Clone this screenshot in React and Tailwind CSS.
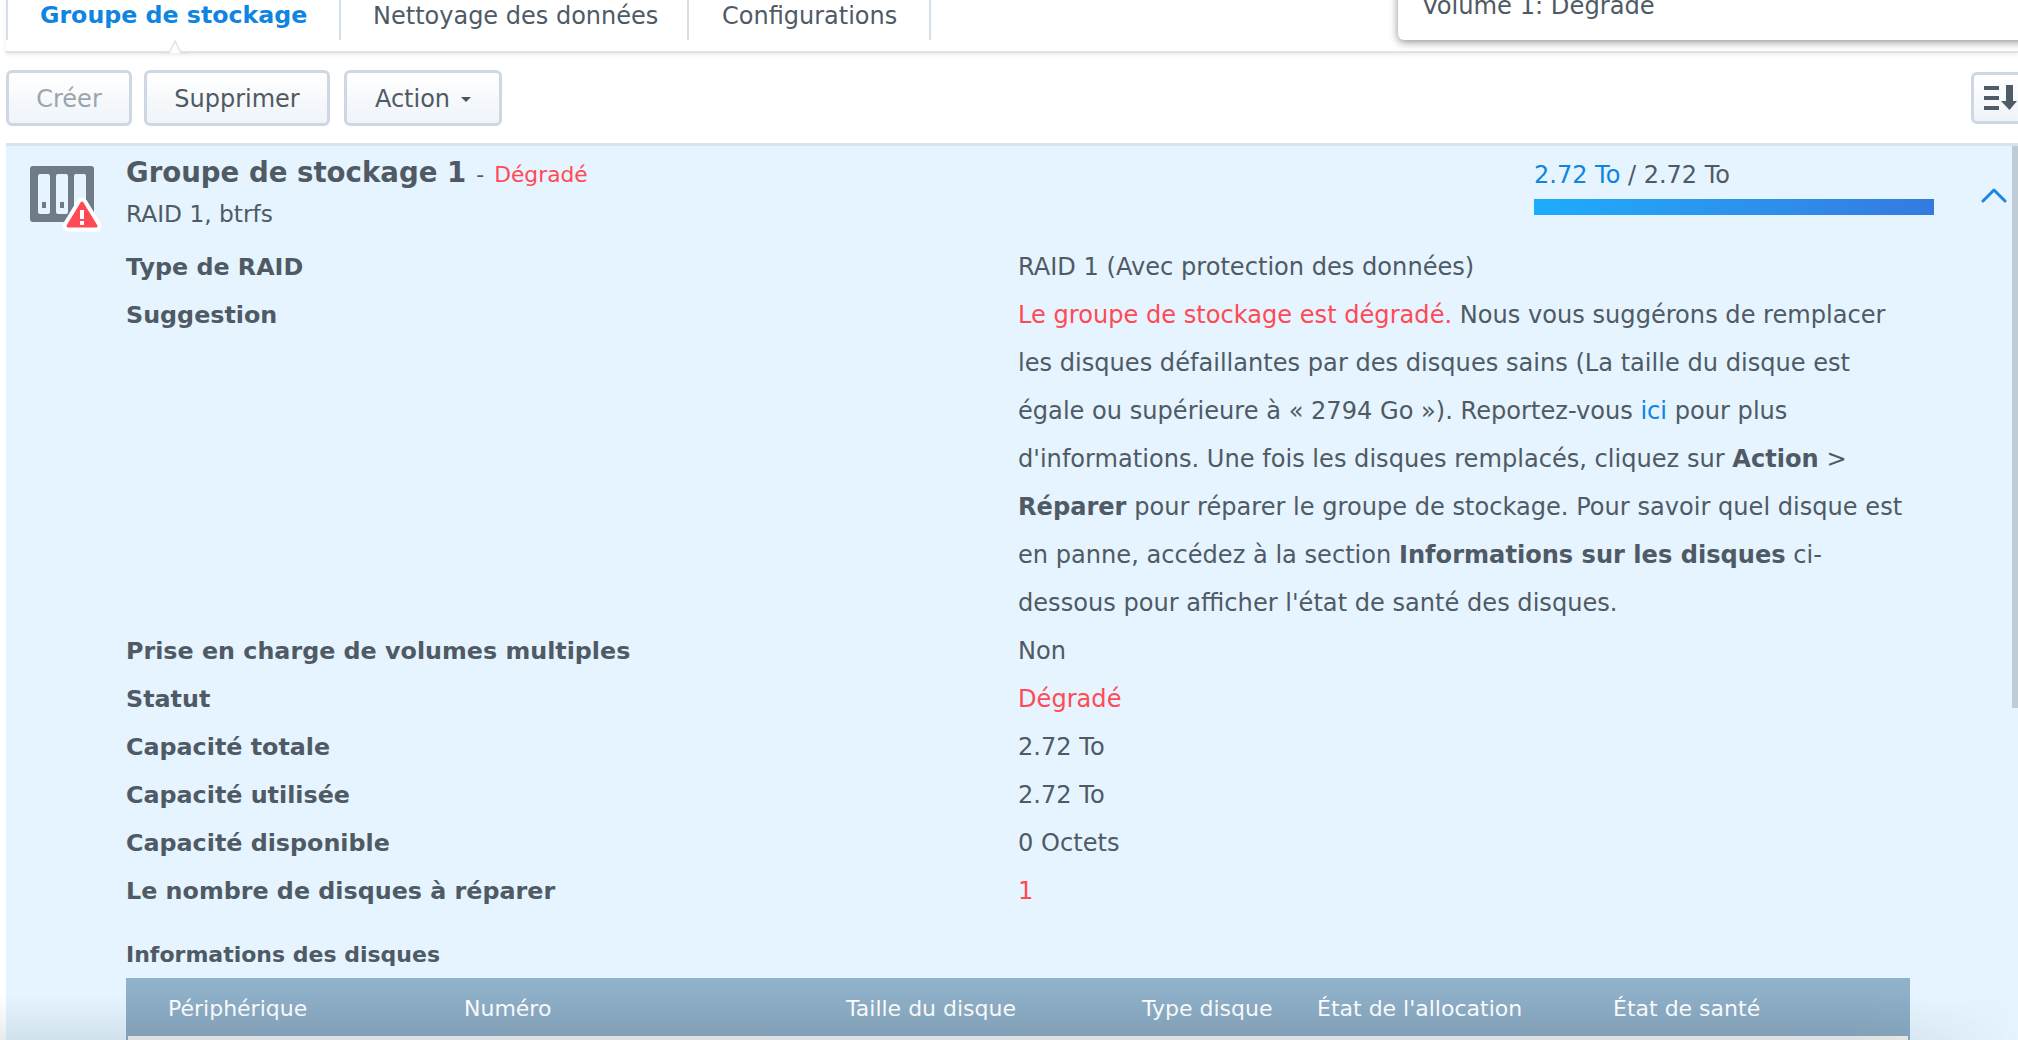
import React from "react";

const rows = [
  { label: "Prise en charge de volumes multiples", value: "Non" },
  { label: "Statut", value: "Dégradé", red: true },
  { label: "Capacité totale", value: "2.72 To" },
  { label: "Capacité utilisée", value: "2.72 To" },
  { label: "Capacité disponible", value: "0 Octets" },
  { label: "Le nombre de disques à réparer", value: "1", red: true },
];

const columns = [
  { name: "Périphérique", width: "w-[296px]" },
  { name: "Numéro", width: "w-[382px]" },
  { name: "Taille du disque", width: "w-[296px]" },
  { name: "Type disque", width: "w-[175px]" },
  { name: "État de l'allocation", width: "w-[296px]" },
  { name: "État de santé", width: "w-[200px]" },
];

function Row({ label, children }) {
  return (
    <div className="flex">
      <div className="w-[892px] shrink-0 font-bold text-[23.8px]">{label}</div>
      <div className="w-[892px] shrink-0">{children}</div>
    </div>
  );
}

function PoolIcon() {
  return (
    <svg width="76" height="70" viewBox="0 0 76 70" className="block">
      <rect x="0" y="0" width="64" height="56" rx="3" fill="#6f7b86" />
      <rect x="8" y="8" width="12" height="40" rx="2" fill="#e5f4fe" />
      <rect x="26" y="8" width="12" height="40" rx="2" fill="#e5f4fe" />
      <rect x="44" y="8" width="12" height="40" rx="2" fill="#e5f4fe" />
      <rect x="12" y="36" width="4" height="6" fill="#6f7b86" />
      <rect x="30" y="36" width="4" height="6" fill="#6f7b86" />
      <path d="M52 37 L38 60 H66 Z" fill="#ffffff" stroke="#ffffff" strokeWidth="11" strokeLinejoin="round" />
      <path d="M52 37 L38 60 H66 Z" fill="#ff4a55" stroke="#ff4a55" strokeWidth="3" strokeLinejoin="round" />
      <rect x="50" y="44" width="4" height="9" fill="#ffffff" />
      <rect x="50" y="55" width="4" height="4" fill="#ffffff" />
    </svg>
  );
}

export default function App() {
  return (
    <div
      className="relative w-[2018px] h-[1040px] overflow-hidden bg-white text-[#4f5a65] text-[24.1px] leading-[48px]"
      style={{ fontFamily: '"DejaVu Sans", Verdana, sans-serif' }}
    >
      {/* tabs */}
      <div className="relative ml-[6px] h-[53px] border-b-2 border-[#dfe3e8] shadow-[0_2px_4px_rgba(0,0,0,0.08)]">
        <div className="flex h-[40px] items-center leading-none">
          <div className="w-[335px] h-full border-r-2 border-[#d5dfe9] border-l-2 pl-[32px] pb-[9px] flex items-center font-bold text-[23.7px] text-[#0f84e0]">
            Groupe de stockage
          </div>
          <div className="w-[348px] h-full border-r-2 border-[#d5dfe9] pl-[32px] pb-[9px] flex items-center text-[24px]">
            Nettoyage des données
          </div>
          <div className="w-[242px] h-full border-r-2 border-[#d5dfe9] pl-[33px] pb-[9px] flex items-center text-[24px]">
            Configurations
          </div>
        </div>
        <svg width="28" height="14" viewBox="0 0 28 14" className="absolute left-[155px] top-[40px]">
          <path d="M0 13 H8 L14 1 L20 13 H28" fill="#ffffff" stroke="#dfe3e8" strokeWidth="1.5" />
        </svg>
      </div>

      {/* toolbar */}
      <div className="flex h-[90px] items-center justify-between pl-[6px] pb-[1px] leading-none text-[24px]">
        <div className="flex gap-[12px]">
          <button className="w-[126px] h-[56px] pt-[3px] rounded-[6px] border-[3px] border-[#cdd8e4] bg-gradient-to-b from-white to-[#eff4f9] text-[#9aa5af]">
            Créer
          </button>
          <button className="w-[186px] h-[56px] pt-[3px] rounded-[6px] border-[3px] border-[#cdd8e4] bg-gradient-to-b from-white to-[#eff4f9]">
            Supprimer
          </button>
          <button className="w-[158px] h-[56px] pt-[3px] ml-[2px] rounded-[6px] border-[3px] border-[#cdd8e4] bg-gradient-to-b from-white to-[#eff4f9] flex items-center justify-center gap-[11px]">
            Action
            <span className="w-0 h-0 border-x-[5px] border-x-transparent border-t-[5px] border-t-[#4a5560]" />
          </button>
        </div>
        <button className="w-[60px] h-[52px] -mr-[13px] shrink-0 rounded-l-[6px] border-[3px] border-[#cdd8e4] bg-gradient-to-b from-white to-[#eff4f9] pl-[10px]">
          <svg width="34" height="26" viewBox="0 0 34 26" className="block">
            <rect x="0" y="1" width="15" height="4" fill="#4f5b67" />
            <rect x="0" y="11" width="15" height="4" fill="#4f5b67" />
            <rect x="0" y="21" width="15" height="4" fill="#4f5b67" />
            <path d="M22 0 H29 V16 H33 L25.5 25 L17 16 H22 Z" fill="#4f5b67" />
          </svg>
        </button>
      </div>

      {/* storage pool */}
      <div className="relative ml-[6px] h-[897px] border-t-[3px] border-[#d7e3ef] bg-[#e5f4fe]">
        <div className="flex h-[97px]">
          <div className="w-[120px] shrink-0 pl-[24px] pt-[20px]">
            <PoolIcon />
          </div>
          <div className="w-[1408px] shrink-0 pt-[3px]">
            <div className="flex items-baseline leading-[48px]">
              <span className="font-bold text-[27.6px]">Groupe de stockage 1</span>
              <span className="ml-[10px] text-[22px]">-</span>
              <span className="ml-[10px] text-[21.8px] text-[#ff4a55]">Dégradé</span>
            </div>
            <div className="text-[23.3px] leading-[36px] -mt-[3px]">RAID 1, btrfs</div>
          </div>
          <div className="w-[400px] shrink-0 pt-[5px]">
            <div className="leading-[48px] text-[24px]">
              <span className="text-[#0f84e0]">2.72 To</span> / 2.72 To
            </div>
            <div className="h-[16px] bg-gradient-to-r from-[#1cacfc] to-[#347ae0]" />
          </div>
          <div className="pl-[47px] pt-[41px]">
            <svg width="26" height="16" viewBox="0 0 26 16" className="block">
              <path d="M2 14 L13 3 L24 14" fill="none" stroke="#1a87e2" strokeWidth="3" strokeLinecap="round" strokeLinejoin="round" />
            </svg>
          </div>
        </div>

        <div className="pl-[120px]">
          <Row label="Type de RAID">RAID 1 (Avec protection des données)</Row>
          <Row label="Suggestion">
            <span className="text-[#ff4a55]">Le groupe de stockage est dégradé.</span> Nous vous suggérons de remplacer
            <br />
            les disques défaillantes par des disques sains (La taille du disque est
            <br />
            égale ou supérieure à « 2794 Go »). Reportez-vous <span className="text-[#0f84e0]">ici</span> pour plus
            <br />
            d'informations. Une fois les disques remplacés, cliquez sur <b>Action</b> &gt;
            <br />
            <b>Réparer</b> pour réparer le groupe de stockage. Pour savoir quel disque est
            <br />
            en panne, accédez à la section <b>Informations sur les disques</b> ci-
            <br />
            dessous pour afficher l'état de santé des disques.
          </Row>
          {rows.map((row) => (
            <Row key={row.label} label={row.label}>
              <span className={row.red ? "text-[#ff4a55]" : ""}>{row.value}</span>
            </Row>
          ))}

          <div className="mt-[22px] font-bold text-[22px] leading-[36px]">Informations des disques</div>
          <div className="mt-[5px] w-[1784px]">
            <div className="flex h-[58px] items-center pl-[42px] pt-[3px] text-white text-[22px] leading-none bg-gradient-to-b from-[#90b2cb] to-[#88a7bf]">
              {columns.map((col) => (
                <div key={col.name} className={`${col.width} shrink-0`}>
                  {col.name}
                </div>
              ))}
            </div>
            <div className="h-[40px] bg-[#f3f2f0] border-x-2 border-[#88a7bf]" />
          </div>
        </div>

        {/* scrollbar */}
        <div className="absolute right-0 top-0 w-[6px] h-[562px] bg-[#bfcbd5]" />
      </div>

      {/* soft shadow along the bottom edge */}
      <div className="absolute inset-x-0 bottom-0 h-[44px] pointer-events-none bg-gradient-to-t from-[rgba(90,115,135,0.14)] to-transparent [mask-image:linear-gradient(to_right,black_92%,transparent)]" />

      {/* notification popup */}
      <div className="absolute left-[1398px] -top-[20px] w-[640px] h-[60px] rounded-[6px] bg-white pl-[24px] pt-[2px] shadow-[0_2px_8px_rgba(0,0,0,0.45)] text-[24.2px] leading-[48px]">
        Volume 1: Dégradé
      </div>
    </div>
  );
}
